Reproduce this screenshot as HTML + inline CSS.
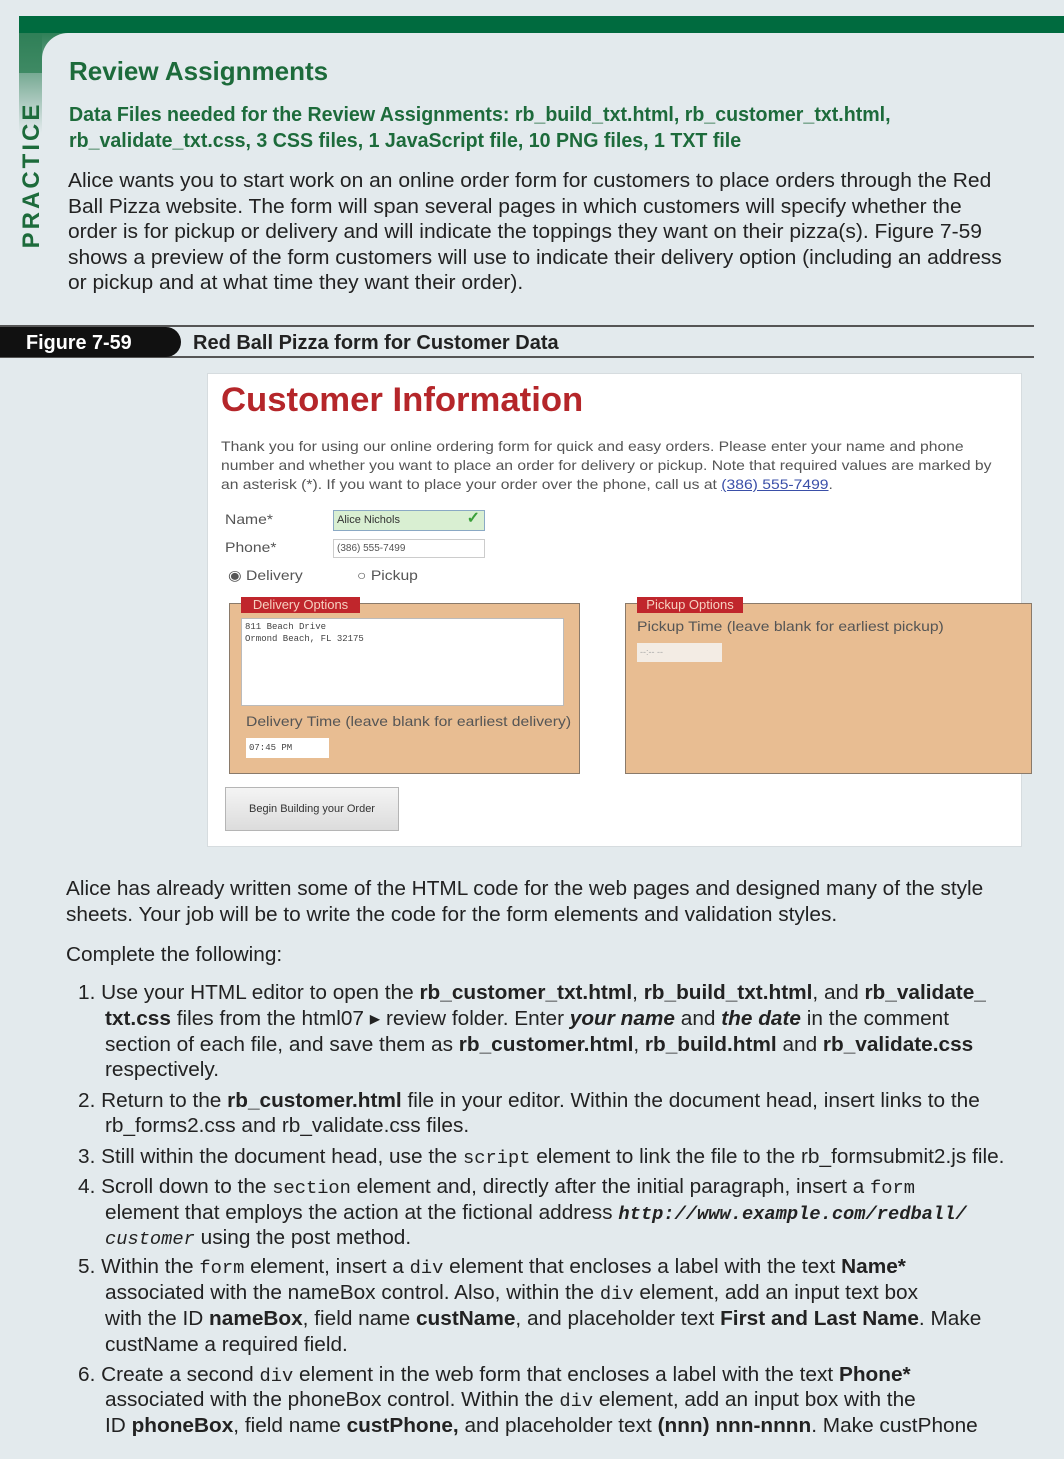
<!DOCTYPE html>
<html><head><meta charset="utf-8"><style>
body{margin:0;width:1064px;height:1459px;background:#e3eaed;position:relative;overflow:hidden;font-family:"Liberation Sans",sans-serif;color:#222}
.a{position:absolute}
.l{position:absolute;white-space:nowrap;font-size:20px;line-height:24px;transform-origin:0 50%;transform:scaleX(1.04)}
.g{color:#1d6b3b;font-weight:bold}
b{font-weight:bold}
code,.m{font-family:"Liberation Mono",monospace;font-size:18px}
.s{position:absolute;white-space:nowrap;font-size:14px;line-height:18px;color:#555;transform-origin:0 50%;transform:scaleX(1.12)}
</style></head><body>
<div class="a" style="left:19px;top:16px;width:1045px;height:17px;background:#006b3f"></div>
<div class="a" style="left:19px;top:33px;width:50px;height:100px;background:linear-gradient(#2f7f57,rgba(227,234,237,0))"></div>
<div class="a" style="left:42px;top:33px;width:60px;height:110px;background:#e3eaed;border-top-left-radius:26px"></div>
<div class="a" style="left:19px;top:33px;width:23px;height:40px;background:linear-gradient(#2f7f57,#3f8a64)"></div>
<div class="a" style="left:32px;top:175px;transform:translate(-50%,-50%) rotate(-90deg);font-size:24px;font-weight:bold;color:#1d6b3b;letter-spacing:3px;white-space:nowrap">PRACTICE</div>

<div class="l g" style="left:69px;top:56px;font-size:26px;line-height:30px;transform:scaleX(1)">Review Assignments</div>
<div class="l g" style="left:69px;top:103px;transform:scaleX(.98)">Data Files needed for the Review Assignments: rb_build_txt.html, rb_customer_txt.html,</div>
<div class="l g" style="left:69px;top:129px;transform:scaleX(.98)">rb_validate_txt.css, 3 CSS files, 1 JavaScript file, 10 PNG files, 1 TXT file</div>
<div class="l" style="left:68px;top:169px;transform:scaleX(1.05)">Alice wants you to start work on an online order form for customers to place orders through the Red</div>
<div class="l" style="left:68px;top:195px;transform:scaleX(1.05)">Ball Pizza website. The form will span several pages in which customers will specify whether the</div>
<div class="l" style="left:68px;top:220px;transform:scaleX(1.05)">order is for pickup or delivery and will indicate the toppings they want on their pizza(s). Figure 7-59</div>
<div class="l" style="left:68px;top:246px;transform:scaleX(1.05)">shows a preview of the form customers will use to indicate their delivery option (including an address</div>
<div class="l" style="left:68px;top:271px;transform:scaleX(1.05)">or pickup and at what time they want their order).</div>

<div class="a" style="left:0;top:325px;width:1034px;height:2px;background:#555"></div>
<div class="a" style="left:0;top:356px;width:1034px;height:2px;background:#555"></div>
<div class="a" style="left:0;top:327px;width:181px;height:30px;background:#111;border-radius:0 15px 15px 0"></div>
<div class="l" style="left:26px;top:331px;color:#fff;font-weight:bold;transform:scaleX(.99)">Figure 7-59</div>
<div class="l" style="left:193px;top:331px;font-weight:bold;transform:scaleX(1)">Red Ball Pizza form for Customer Data</div>

<div class="a" style="left:207px;top:373px;width:813px;height:472px;background:#fff;border:1px solid #d6dcdf"></div>
<div class="a" style="left:221px;top:380px;font-size:34px;line-height:40px;font-weight:bold;color:#b5262a;white-space:nowrap;transform-origin:0 50%;transform:scaleX(1.02)">Customer Information</div>
<div class="s" style="left:221px;top:437px">Thank you for using our online ordering form for quick and easy orders. Please enter your name and phone</div>
<div class="s" style="left:221px;top:456px">number and whether you want to place an order for delivery or pickup. Note that required values are marked by</div>
<div class="s" style="left:221px;top:475px">an asterisk (*). If you want to place your order over the phone, call us at <span style="color:#3a4fa8;text-decoration:underline">(386) 555-7499</span>.</div>
<div class="s" style="left:225px;top:510px">Name*</div>
<div class="a" style="left:333px;top:510px;width:150px;height:19px;background:#d9efd2;border:1px solid #8aa9c4;font-size:11px;line-height:19px;color:#333;text-indent:3px">Alice Nichols<span style="position:absolute;right:4px;top:-2px;color:#3aa03a;font-size:16px;font-weight:bold">✓</span></div>
<div class="s" style="left:225px;top:538px">Phone*</div>
<div class="a" style="left:333px;top:539px;width:150px;height:17px;background:#fff;border:1px solid #ccc;font-size:10px;line-height:17px;color:#555;text-indent:3px">(386) 555-7499</div>
<div class="s" style="left:228px;top:566px">◉ Delivery</div>
<div class="s" style="left:357px;top:566px">○ Pickup</div>

<div class="a" style="left:229px;top:603px;width:349px;height:169px;background:#e8bd92;border:1px solid #8a7a6a"></div>
<div class="a" style="left:241px;top:597px;width:119px;height:16px;background:#c0262c;color:#f6d0c0;font-size:13px;line-height:16px;text-align:center">Delivery Options</div>
<div class="a" style="left:241px;top:618px;width:323px;height:88px;background:#fff;border:1px solid #bbb;font-family:'Liberation Mono',monospace;font-size:9px;line-height:12px;color:#444;padding:2px 3px;box-sizing:border-box">811 Beach Drive<br>Ormond Beach, FL  32175</div>
<div class="s" style="left:246px;top:712px">Delivery Time (leave blank for earliest delivery)</div>
<div class="a" style="left:246px;top:738px;width:83px;height:20px;background:#fff;font-family:'Liberation Mono',monospace;font-size:9px;line-height:20px;color:#444;text-indent:3px">07:45 PM</div>

<div class="a" style="left:625px;top:603px;width:405px;height:169px;background:#e8bd92;border:1px solid #8a7a6a"></div>
<div class="a" style="left:637px;top:597px;width:106px;height:16px;background:#c0262c;color:#f6d0c0;font-size:13px;line-height:16px;text-align:center">Pickup Options</div>
<div class="s" style="left:637px;top:617px">Pickup Time (leave blank for earliest pickup)</div>
<div class="a" style="left:637px;top:643px;width:85px;height:19px;background:#f3ece4;font-size:9px;line-height:19px;color:#aaa;text-indent:3px">--:-- --</div>

<div class="a" style="left:225px;top:787px;width:172px;height:42px;background:linear-gradient(#f4f4f4,#dcdcdc);border:1px solid #b5b5b5;font-size:11px;line-height:42px;color:#333;text-align:center">Begin Building your Order</div>

<div class="l" style="left:66px;top:877px">Alice has already written some of the HTML code for the web pages and designed many of the style</div>
<div class="l" style="left:66px;top:903px">sheets. Your job will be to write the code for the form elements and validation styles.</div>
<div class="l" style="left:66px;top:943px">Complete the following:</div>

<div class="l" style="left:78px;top:981px">1. Use your HTML editor to open the <b>rb_customer_txt.html</b>, <b>rb_build_txt.html</b>, and <b>rb_validate_</b></div>
<div class="l" style="left:105px;top:1007px"><b>txt.css</b> files from the html07 ▸ review folder. Enter <b><i>your name</i></b> and <b><i>the date</i></b> in the comment</div>
<div class="l" style="left:105px;top:1033px">section of each file, and save them as <b>rb_customer.html</b>, <b>rb_build.html</b> and <b>rb_validate.css</b></div>
<div class="l" style="left:105px;top:1058px">respectively.</div>
<div class="l" style="left:78px;top:1089px">2. Return to the <b>rb_customer.html</b> file in your editor. Within the document head, insert links to the</div>
<div class="l" style="left:105px;top:1114px">rb_forms2.css and rb_validate.css files.</div>
<div class="l" style="left:78px;top:1145px">3. Still within the document head, use the <code>script</code> element to link the file to the rb_formsubmit2.js file.</div>
<div class="l" style="left:78px;top:1175px">4. Scroll down to the <code>section</code> element and, directly after the initial paragraph, insert a <code>form</code></div>
<div class="l" style="left:105px;top:1201px">element that employs the action at the fictional address <code><b><i>http://www.example.com/redball/</i></b></code></div>
<div class="l" style="left:105px;top:1226px"><code><i>customer</i></code> using the post method.</div>
<div class="l" style="left:78px;top:1255px">5. Within the <code>form</code> element, insert a <code>div</code> element that encloses a label with the text <b>Name*</b></div>
<div class="l" style="left:105px;top:1281px">associated with the nameBox control. Also, within the <code>div</code> element, add an input text box</div>
<div class="l" style="left:105px;top:1307px">with the ID <b>nameBox</b>, field name <b>custName</b>, and placeholder text <b>First and Last Name</b>. Make</div>
<div class="l" style="left:105px;top:1333px">custName a required field.</div>
<div class="l" style="left:78px;top:1363px">6. Create a second <code>div</code> element in the web form that encloses a label with the text <b>Phone*</b></div>
<div class="l" style="left:105px;top:1388px">associated with the phoneBox control. Within the <code>div</code> element, add an input box with the</div>
<div class="l" style="left:105px;top:1414px">ID <b>phoneBox</b>, field name <b>custPhone,</b> and placeholder text <b>(nnn) nnn-nnnn</b>. Make custPhone</div>
</body></html>
